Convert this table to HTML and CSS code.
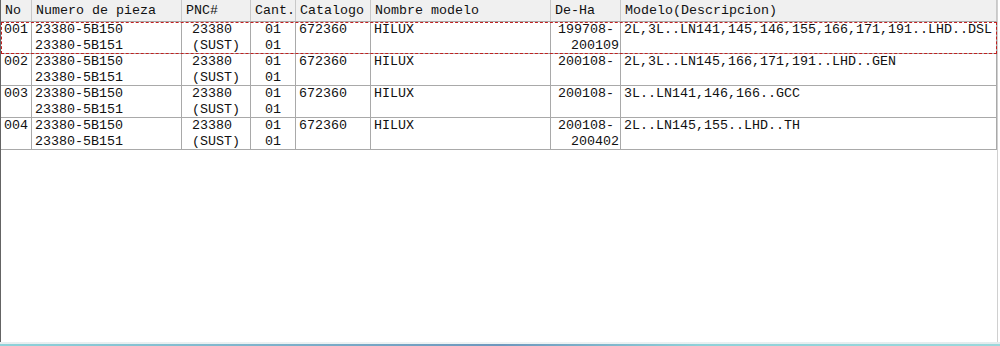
FILE: index.html
```html
<!DOCTYPE html>
<html>
<head>
<meta charset="utf-8">
<link rel="stylesheet" href="styles.css">
</head>
<body>
<div class="frame">
  <div class="grid">
    <div class="row head">
      <div class="c">No</div>
      <div class="c">Numero de pieza</div>
      <div class="c">PNC#</div>
      <div class="c">Cant.</div>
      <div class="c">Catalogo</div>
      <div class="c">Nombre modelo</div>
      <div class="c">De-Ha</div>
      <div class="c">Modelo(Descripcion)</div>
    </div>
    <div class="row data focus">
      <div class="c">001</div>
      <div class="c"><div>23380-5B150</div><div>23380-5B151</div></div>
      <div class="c pnc"><div>23380</div><div>(SUST)</div></div>
      <div class="c ctr"><div>01</div><div>01</div></div>
      <div class="c">672360</div>
      <div class="c">HILUX</div>
      <div class="c dh"><div class="l1">199708-</div><div>200109</div></div>
      <div class="c">2L,3L..LN141,145,146,155,166,171,191..LHD..DSL</div>
    </div>
    <div class="row data">
      <div class="c">002</div>
      <div class="c"><div>23380-5B150</div><div>23380-5B151</div></div>
      <div class="c pnc"><div>23380</div><div>(SUST)</div></div>
      <div class="c ctr"><div>01</div><div>01</div></div>
      <div class="c">672360</div>
      <div class="c">HILUX</div>
      <div class="c dh"><div class="l1">200108-</div></div>
      <div class="c">2L,3L..LN145,166,171,191..LHD..GEN</div>
    </div>
    <div class="row data">
      <div class="c">003</div>
      <div class="c"><div>23380-5B150</div><div>23380-5B151</div></div>
      <div class="c pnc"><div>23380</div><div>(SUST)</div></div>
      <div class="c ctr"><div>01</div><div>01</div></div>
      <div class="c">672360</div>
      <div class="c">HILUX</div>
      <div class="c dh"><div class="l1">200108-</div></div>
      <div class="c">3L..LN141,146,166..GCC</div>
    </div>
    <div class="row data">
      <div class="c">004</div>
      <div class="c"><div>23380-5B150</div><div>23380-5B151</div></div>
      <div class="c pnc"><div>23380</div><div>(SUST)</div></div>
      <div class="c ctr"><div>01</div><div>01</div></div>
      <div class="c">672360</div>
      <div class="c">HILUX</div>
      <div class="c dh"><div class="l1">200108-</div><div>200402</div></div>
      <div class="c">2L..LN145,155..LHD..TH</div>
    </div>
  </div>
</div>
<div class="edge"></div>
<div class="strip"></div>
</body>
</html>
```
FILE: styles.css
```css
html, body {
  margin: 0;
  padding: 0;
  background: #ffffff;
}
body {
  width: 1000px;
  height: 346px;
  overflow: hidden;
  font-family: "Liberation Mono", "Courier New", monospace;
  font-size: 13.33px;
  color: #111111;
}
.frame {
  box-sizing: border-box;
  width: 998px;
  height: 342px;
  border-left: 1px solid #646464;
  border-right: 1px solid #d0d0d0;
  background: #ffffff;
}
.grid {
  display: flex;
  flex-direction: column;
  width: 996px;
}
.row {
  display: grid;
  grid-template-columns: 31px 150px 69px 45px 75px 180px 70px 376px;
  border-bottom: 1px solid #a9a9a9;
  position: relative;
}
.c {
  box-sizing: border-box;
  border-right: 1px solid #a9a9a9;
  padding-left: 3px;
  white-space: nowrap;
  overflow: hidden;
}
.head {
  background: #f0f0f0;
  height: 22px;
  box-sizing: border-box;
}
.head .c {
  line-height: 21px;
  padding-left: 4px;
  border-right-color: #c8c8c8;
}
.data {
  height: 32px;
  box-sizing: border-box;
}
.data .c {
  line-height: 16px;
}
.data .pnc {
  padding-left: 10px;
}
.data .ctr {
  padding-left: 0;
  text-align: center;
}
.data .dh {
  padding-left: 0;
  padding-right: 1px;
  text-align: right;
}
.data .dh .l1 {
  margin-right: 5px;
}
.focus::after {
  content: "";
  position: absolute;
  left: 0;
  top: 0;
  right: 0;
  bottom: -1px;
  border: 1px dashed #c02020;
  pointer-events: none;
}
.edge {
  height: 2px;
  background: linear-gradient(to right, #e8eef0, #eef3f4 50%, #e4ecee);
}
.strip {
  height: 2px;
  background: linear-gradient(to right, #8ed3da 0%, #7fb4cc 25%, #6d97bd 50%, #8fd1d9 70%, #9ad8dc 100%);
}
```
